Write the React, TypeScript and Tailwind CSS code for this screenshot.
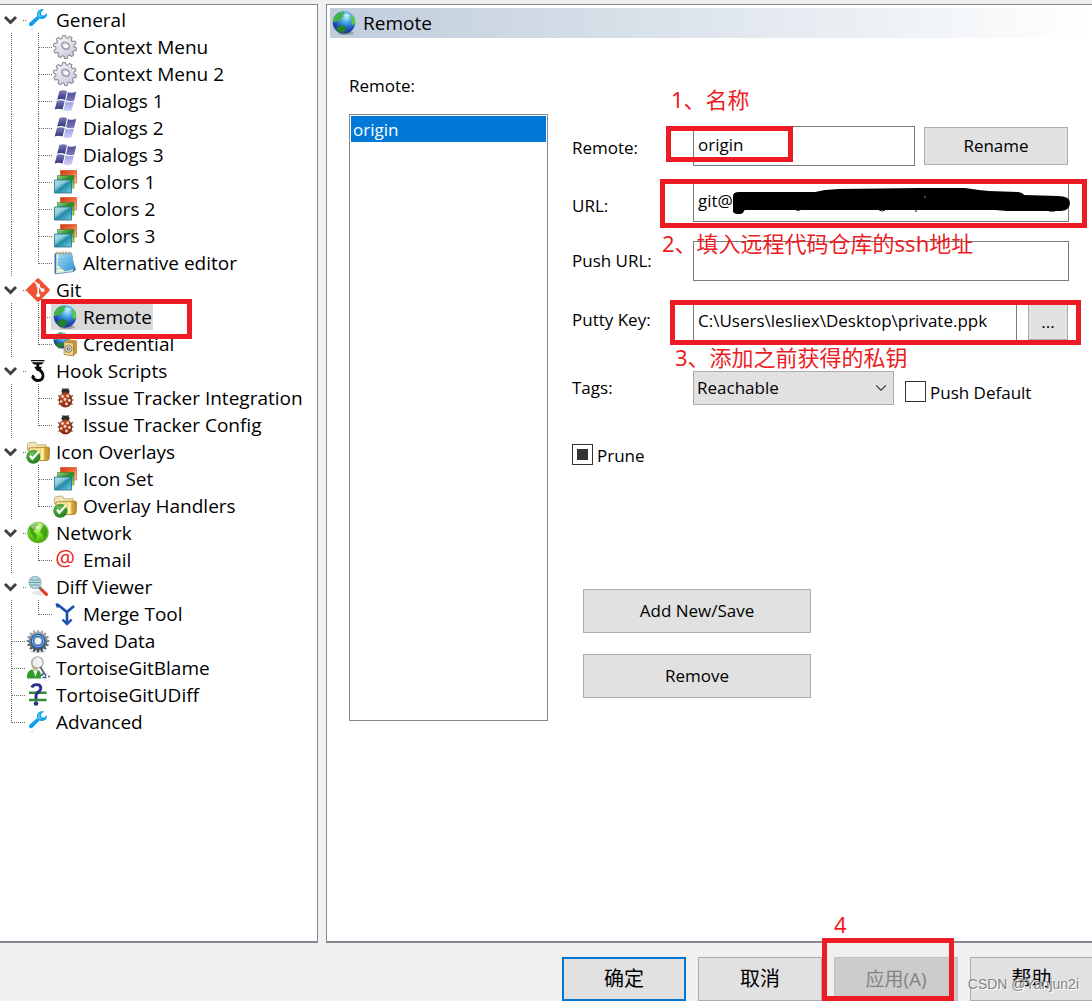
import React, { useEffect, useRef, useState } from 'react';
import { ChevronDown } from 'lucide-react';

type IconName =
  | 'wrench' | 'gear' | 'windows' | 'colors' | 'notepad' | 'git' | 'globe' | 'credential' | 'hook'
  | 'bug' | 'folder' | 'network' | 'email' | 'diff' | 'merge' | 'saved' | 'blame' | 'udiff';

interface TreeNode {
  label: string;
  icon: IconName;
  children?: TreeNode[];
}

const TREE: TreeNode[] = [
  {
    label: 'General',
    icon: 'wrench',
    children: [
      { label: 'Context Menu', icon: 'gear' },
      { label: 'Context Menu 2', icon: 'gear' },
      { label: 'Dialogs 1', icon: 'windows' },
      { label: 'Dialogs 2', icon: 'windows' },
      { label: 'Dialogs 3', icon: 'windows' },
      { label: 'Colors 1', icon: 'colors' },
      { label: 'Colors 2', icon: 'colors' },
      { label: 'Colors 3', icon: 'colors' },
      { label: 'Alternative editor', icon: 'notepad' },
    ],
  },
  {
    label: 'Git',
    icon: 'git',
    children: [
      { label: 'Remote', icon: 'globe' },
      { label: 'Credential', icon: 'credential' },
    ],
  },
  {
    label: 'Hook Scripts',
    icon: 'hook',
    children: [
      { label: 'Issue Tracker Integration', icon: 'bug' },
      { label: 'Issue Tracker Config', icon: 'bug' },
    ],
  },
  {
    label: 'Icon Overlays',
    icon: 'folder',
    children: [
      { label: 'Icon Set', icon: 'colors' },
      { label: 'Overlay Handlers', icon: 'folder' },
    ],
  },
  { label: 'Network', icon: 'network', children: [{ label: 'Email', icon: 'email' }] },
  { label: 'Diff Viewer', icon: 'diff', children: [{ label: 'Merge Tool', icon: 'merge' }] },
  { label: 'Saved Data', icon: 'saved' },
  { label: 'TortoiseGitBlame', icon: 'blame' },
  { label: 'TortoiseGitUDiff', icon: 'udiff' },
  { label: 'Advanced', icon: 'wrench' },
];

// --- Icons ---
const gearPath = (teeth: number, outer: number, inner: number) => {
  const step = (Math.PI * 2) / teeth;
  const points: string[] = [];
  for (let i = 0; i < teeth; i++) {
    const a = i * step;
    [[-0.34, inner], [-0.2, outer], [0.2, outer], [0.34, inner]].forEach(([k, r]) => {
      points.push(`${(12 + Math.cos(a + k * step) * r).toFixed(2)} ${(12 + Math.sin(a + k * step) * r).toFixed(2)}`);
    });
  }
  return `M${points.join('L')}Z`;
};

// Gradients shared by all the icons
const IconDefs = () => (
  <svg className="absolute size-0" aria-hidden="true">
    <defs>
      <linearGradient id="gear" x1="0" y1="0" x2="1" y2="1">
        <stop offset="0" stopColor="#fafaff" /><stop offset="1" stopColor="#c4c4da" />
      </linearGradient>
      <linearGradient id="winDark" x1="0" y1="0" x2="0" y2="1">
        <stop offset="0" stopColor="#7d7dba" /><stop offset="1" stopColor="#33337a" />
      </linearGradient>
      <linearGradient id="winMid" x1="0" y1="0" x2="0" y2="1">
        <stop offset="0" stopColor="#4e4e98" /><stop offset="1" stopColor="#7a7abc" />
      </linearGradient>
      <linearGradient id="winLight" x1="0" y1="0" x2="0" y2="1">
        <stop offset="0" stopColor="#9d9ddd" /><stop offset="1" stopColor="#cfcffb" />
      </linearGradient>
      <linearGradient id="red" x1="0" y1="0" x2="1" y2="1">
        <stop offset="0" stopColor="#c93a12" /><stop offset=".5" stopColor="#f4673b" /><stop offset="1" stopColor="#ffd9b8" />
      </linearGradient>
      <linearGradient id="green" x1="0" y1="0" x2="1" y2="1">
        <stop offset="0" stopColor="#9bd58e" /><stop offset=".5" stopColor="#22861f" /><stop offset="1" stopColor="#c5ef5c" />
      </linearGradient>
      <linearGradient id="teal" x1="0" y1="0" x2="1" y2="1">
        <stop offset="0" stopColor="#9fdbe6" /><stop offset=".45" stopColor="#4fabc2" /><stop offset=".5" stopColor="#2489a6" /><stop offset="1" stopColor="#6fd0e4" />
      </linearGradient>
      <linearGradient id="pad" x1="0" y1="0" x2="1" y2="1">
        <stop offset="0" stopColor="#a9def5" /><stop offset="1" stopColor="#2b8fd8" />
      </linearGradient>
      <radialGradient id="ocean" cx=".6" cy=".25" r=".8">
        <stop offset="0" stopColor="#b9ecff" /><stop offset=".35" stopColor="#3fa0e6" /><stop offset=".75" stopColor="#1c45b0" /><stop offset="1" stopColor="#2a2f8c" />
      </radialGradient>
      <radialGradient id="lime" cx=".45" cy=".25" r=".8">
        <stop offset="0" stopColor="#d8ff8e" /><stop offset=".5" stopColor="#6fdd1a" /><stop offset="1" stopColor="#3f9a0c" />
      </radialGradient>
      <radialGradient id="shell" cx=".4" cy=".3" r=".8">
        <stop offset="0" stopColor="#c4542b" /><stop offset="1" stopColor="#7c1f06" />
      </radialGradient>
      <linearGradient id="gold" x1="0" y1="0" x2="1" y2="0">
        <stop offset="0" stopColor="#fff3bd" /><stop offset=".6" stopColor="#f2d56b" /><stop offset="1" stopColor="#b98418" />
      </linearGradient>
      <radialGradient id="tick" cx=".4" cy=".3" r=".8">
        <stop offset="0" stopColor="#6cc25a" /><stop offset="1" stopColor="#12730f" />
      </radialGradient>
      <linearGradient id="steel" x1="0" y1="0" x2="0" y2="1">
        <stop offset="0" stopColor="#b4b8bc" /><stop offset="1" stopColor="#3f454b" />
      </linearGradient>
    </defs>
  </svg>
);

const Globe = () => (
  <>
    <ellipse cx="14" cy="22" rx="8" ry="2" fill="#777" opacity=".55" />
    <circle cx="12" cy="11.5" r="11.2" fill="url(#ocean)" />
    <path d="M2.3 6C4 3 7.5.9 11.5.8L13 2.6 10.5 4 11.6 5.6 9 7.2 8.6 9.6 6.2 11 5 9.6 2.6 11.4 1 10.6C1 9 1.5 7.300 2.300 6Z" fill="#43b649" />
    <path d="M18.500 5.500 20.500 4.600C22.300 6.500 23.200 9 23.100 11.800L21.400 14.600 19.200 12.400 19.600 9.500Z" fill="#5cc83f" />
    <path d="M6 15.400 10 14 14.500 16.600 13.600 19.600 10.800 22.200C8 21.800 5 20 3.800 18Z" fill="#23802b" />
    <path d="M12 2.500C15 2 17.500 3.200 18.500 5 16 5.800 13 6 12 2.500Z" fill="#d9f6ff" opacity=".6" />
  </>
);

const ICONS: Record<IconName, React.ReactNode> = {
  wrench: (
    <>
      <path d="M4 21.500 8.500 18 7 22.500Q5.500 24 4 21.500Z" fill="#7fd0f5" opacity=".3" />
      <path d="M20.800 5.200 17.800 7.700 15.200 6.900 15.100 4 18 1.600C14.500.5 11.200 2.600 11 6.200L11.200 8 3.800 14.600C2.600 15.800 2.900 17.100 3.700 17.700 4.600 18.500 5.900 18.400 6.700 17.500L13.500 10.600C17.700 12 21.800 9.300 20.800 5.200Z" fill="#109fec" />
      <path d="M12.200 5.500C12.700 3.500 14 2.500 15.500 2.200L13.800 3.800 14 7.500 16 8.600 11.500 9.600Z" fill="#55c3fa" />
    </>
  ),
  gear: (
    <>
      <path d={gearPath(10, 11.6, 9.2)} transform="rotate(12 12 12)" fill="url(#gear)" stroke="#87858d" strokeWidth="1" strokeLinejoin="round" />
      <ellipse cx="12.500" cy="10.800" rx="4" ry="3.200" transform="rotate(30 12.500 10.800)" fill="#dedee8" stroke="#8f8d98" strokeWidth="1.300" />
      <ellipse cx="13.200" cy="11.200" rx="2" ry="1.600" fill="#fff" />
    </>
  ),
  windows: (
    <>
      <path d="M6.300 2.200Q10 .4 14 2.200L12 11Q8 9.200 4.200 10.800Z" fill="url(#winDark)" />
      <path d="M15 3Q19 4.800 23.200 2.800L21.200 11.600Q17 13 13 11.200Z" fill="url(#winMid)" />
      <path d="M3.900 12Q7.800 10.400 11.700 12.200L9.600 20.600Q5.600 18.900 1.700 20.500Z" fill="url(#winDark)" />
      <path d="M12.700 12.400Q16.800 14.200 20.900 12.600L18.700 21.300Q14.500 23 10.600 21.200Z" fill="url(#winLight)" />
    </>
  ),
  colors: (
    <>
      <path d="M7.500.5h16v12.500h-16z" fill="url(#red)" stroke="#c8451d" strokeWidth=".6" />
      <path d="M4.500 5.500h16.500v12.500h-16.500z" fill="url(#green)" stroke="#35822c" strokeWidth=".6" />
      <path d="M1.500 10h17v13h-17z" fill="url(#teal)" stroke="#1d6f89" strokeWidth=".8" />
      <path d="M2 10.500h16Q8 13 2 20Z" fill="#fff" opacity=".28" />
    </>
  ),
  notepad: (
    <>
      <path d="M17 3 23 18.500 20 21.500Z" fill="#5a6f90" />
      <path d="M2 2.500 18.500 2 20.500 20.500 2 23Z" fill="#e8f6d4" stroke="#4a78b8" strokeWidth=".8" />
      <path d="M5.500 3 19 2.700 21.800 18 12 20.500 4.500 14Z" fill="url(#pad)" />
      <path d="M3.500 8.500h15M3.500 11.500h15.500M3.500 14.500h15.500M3.500 17.500h16" stroke="#5fb0c8" strokeWidth=".6" opacity=".7" />
      <path d="M2.500 3V22" stroke="#3c6fc0" strokeWidth="1.400" />
      <path d="M4 .5v3M7 .5v3M10 .5v3M13 .5v3M16 .5v3" stroke="#b89f5a" strokeWidth="1.300" />
    </>
  ),
  git: (
    <>
      <path d="M10.900.7Q12 -.2 13.100.7L23.400 10.900Q24.300 12 23.400 13.100L13.100 23.400Q12 24.300 10.900 23.400L.6 13.100Q-.3 12 .6 10.900Z" fill="#f05133" />
      <path d="M8.500 3.500 12.200 7.200V17.500M12.200 8 16.200 12" stroke="#fff" strokeWidth="1.600" fill="none" />
      <circle cx="12.200" cy="7.500" r="1.900" fill="#fff" />
      <circle cx="12.200" cy="17.200" r="1.900" fill="#fff" />
      <circle cx="16.600" cy="12.200" r="1.900" fill="#fff" />
    </>
  ),
  globe: <Globe />,
  credential: (
    <>
      <g transform="scale(.72)"><Globe /></g>
      <path d="M11 10 15 7.500 24 8.500V21L20.500 24 11 22.500Z" fill="#c3983e" />
      <path d="M11 10 20.500 11V24L11 22.500Z" fill="#ecd48a" stroke="#98742a" strokeWidth=".6" />
      <circle cx="15.500" cy="16.800" r="3.600" fill="#d5d3c8" stroke="#77715c" strokeWidth=".8" />
      <circle cx="15.500" cy="16.800" r="1.300" fill="none" stroke="#5e5b4e" strokeWidth=".9" />
    </>
  ),
  hook: (
    <>
      <path d="M5 1h13.500v1.300H5zM5.500 3.200h12.500L15.500 5.600H8z" fill="#080808" />
      <path d="M11.800 5V9.500C14.500 11.500 17 13 17 16.500 17 19.800 14.800 21.500 12 21.500 9.500 21.500 7.600 20.300 6.800 17.800" fill="none" stroke="#080808" strokeWidth="2.800" />
      <path d="M5 19 6.500 15.500 9.300 17.800ZM8.200 7.800h7.600L13.800 12H11Z" fill="#080808" />
    </>
  ),
  bug: (
    <>
      <path d="M9.500 2 11 4.500M15.500 2 13.600 4.500" stroke="#333" strokeWidth="1" />
      <ellipse cx="12.500" cy="5.500" rx="4" ry="3" fill="#2c2b2a" />
      <path d="M5 9.500 8 11M4.500 14h3M5.500 18.500 8 17M20 9.500 17 11M20.500 14h-3M19.500 18.500 17 17" stroke="#47352c" strokeWidth="1.200" />
      <ellipse cx="12.500" cy="14" rx="6.800" ry="7.600" fill="url(#shell)" />
      <g fill="#f4d9cb">
        <circle cx="9.500" cy="10.500" r="1.400" /><circle cx="14.800" cy="10" r="1.400" />
        <circle cx="12" cy="13.500" r="1.400" /><circle cx="8.200" cy="15.500" r="1.300" />
        <circle cx="16.400" cy="14.500" r="1.400" /><circle cx="13.500" cy="18" r="1.400" />
      </g>
    </>
  ),
  folder: (
    <>
      <path d="M1.500 10V4.500Q1.500 3 3 2.800L8.500 2Q10 2 10.500 3.500L11 5 20 4.500V10Z" fill="#f0e4b8" stroke="#bba568" strokeWidth=".8" />
      <path d="M3 8 21.500 7Q23.700 7 23.600 9L23 18.500Q22.800 20.500 21 20.500H3Z" fill="url(#gold)" stroke="#a87d1e" strokeWidth=".8" />
      <path d="M16.500 8.500V20" stroke="#fff7cf" strokeWidth="2" />
      <path d="M19.500 8.500V20" stroke="#cf9a2a" strokeWidth="1" opacity=".6" />
      <circle cx="7.300" cy="16.700" r="7" fill="url(#tick)" />
      <path d="M3.200 16.500 6.200 20.500 13.800 12 12.200 10.700 6.600 16.800 4.600 15Z" fill="#fff" />
    </>
  ),
  network: (
    <>
      <circle cx="12" cy="11.500" r="10.500" fill="url(#lime)" stroke="#59a91e" strokeWidth=".5" />
      <path d="M3 7C5 3.500 8 2 11.500 2L13 4 10 5.500 10.500 8 7.500 9.500 9.500 12.500 11 14.500 9 19 7.500 15.500 4.500 12Z" fill="#2f8711" opacity=".7" />
      <path d="M16 3.500 19.500 5.500 21.500 9 21 13.500 18 17.500 16.500 13.500 14 11.500 15 8Z" fill="#2f8711" opacity=".65" />
      <ellipse cx="11" cy="5" rx="6.500" ry="3.500" fill="#fff" opacity=".35" />
    </>
  ),
  email: (
    <text x="12" y="18" textAnchor="middle" fontSize="22" fill="#f01a1a" fontFamily="Open Sans, sans-serif">@</text>
  ),
  diff: (
    <>
      <ellipse cx="14" cy="18" rx="8" ry="2.500" fill="#bbb" opacity=".35" />
      <path d="M14 13 20.500 19.500" stroke="#e8321f" strokeWidth="3" strokeLinecap="round" />
      <path d="M12.500 11.500 15.500 14.500" stroke="#777" strokeWidth="2.500" />
      <circle cx="9" cy="7.500" r="6" fill="#b5e0e6" stroke="#9eb6ba" strokeWidth="1.300" />
      <path d="M4.500 5h9M3.800 7.500h10.400M4.500 10h9" stroke="#699ca5" strokeWidth="1" />
    </>
  ),
  merge: (
    <>
      <path d="M4.500 2.500 14 10 21 4M14 10V20" fill="none" stroke="#1b4fae" strokeWidth="2.700" />
      <path d="M3.500 1.500 5 5.500M9.500 17.500 14 22 18.700 17.500" fill="none" stroke="#1b4fae" strokeWidth="2.400" />
    </>
  ),
  saved: (
    <>
      <ellipse cx="12" cy="22.500" rx="8" ry="1.300" fill="#999" opacity=".5" />
      <path d={gearPath(16, 11.4, 9.3)} fill="url(#steel)" />
      <circle cx="12" cy="12" r="7.500" fill="#2465ad" />
      <circle cx="12" cy="12" r="5.600" fill="none" stroke="#8fb8de" strokeWidth="1" />
      <circle cx="12" cy="12" r="3.800" fill="#f3f6f8" stroke="#8da6bd" strokeWidth="1" />
    </>
  ),
  blame: (
    <>
      <path d="M1 22.500Q.5 14.500 6 13.500L13 14.500Q15.500 17 15 22.500Z" fill="#2f9b2d" />
      <path d="M7 14 9.500 21 11.500 14.500Z" fill="#eef5ec" />
      <path d="M5 6Q5 1.500 10.500 2L14 8Q13 14 9 14 5.500 13 5 6Z" fill="#d9a672" />
      <circle cx="11.500" cy="6.500" r="5.600" fill="#f3f5f6" fillOpacity=".9" stroke="#a7acad" strokeWidth="1.300" />
      <path d="M14.500 11 18.500 18" stroke="#656d71" strokeWidth="2" />
      <path d="M15 19.500 18 17.500M16.500 21.500h4M22 20.500h2M19.500 17.500v3" stroke="#38688f" strokeWidth="1.600" />
    </>
  ),
  udiff: (
    <>
      <path d="M3 9.800h17.500M3 17h17.500" stroke="#2f8e35" strokeWidth="2.400" />
      <path d="M5.800 4.500C7 .8 14.800 .3 14.800 5.300 14.800 9 10 9 10 12.500V16" fill="none" stroke="#28308f" strokeWidth="2.900" />
      <circle cx="10" cy="20.500" r="2.300" fill="#28308f" />
    </>
  ),
};

const TreeIcon = ({ name }: { name: IconName }) => (
  <svg viewBox="0 0 24 24" className="size-6 shrink-0 overflow-visible" aria-hidden="true">{ICONS[name]}</svg>
);

// --- Tree ---
const Dotted = ({ d, width }: { d: string; width: number }) => (
  <svg width={width} height="27" className="shrink-0 overflow-visible" aria-hidden="true">
    <path d={d} fill="none" stroke="#6b6b6b" strokeDasharray="1 1" shapeRendering="crispEdges" />
  </svg>
);

interface NodeButtonProps {
  node: TreeNode;
  selected: boolean;
  onSelect: (label: string) => void;
}

const NodeButton = ({ node, selected, onSelect }: NodeButtonProps) => (
  <button
    type="button"
    onClick={() => onSelect(node.label)}
    className={`flex h-[26px] items-center gap-[6px] pl-[2px] pr-px whitespace-nowrap ${selected ? 'bg-[#d9d9d9]' : ''}`}
  >
    <TreeIcon name={node.icon} />
    {node.label}
  </button>
);

const SettingsTree = () => {
  const [selected, setSelected] = useState('Remote');
  const [collapsed, setCollapsed] = useState<string[]>([]);

  const toggle = (label: string) => {
    setCollapsed(prev => (prev.includes(label) ? prev.filter(l => l !== label) : [...prev, label]));
  };

  return (
    <nav className="w-[318px] shrink-0 border-t border-r border-b-2 border-[#828790] bg-white pt-px text-[19px] leading-[26px]">
      <ul>
        {TREE.map((node, i) => (
          <li key={node.label}>
            <div className="flex h-[27px] items-center">
              {node.children ? (
                <button type="button" aria-label={`Toggle ${node.label}`} onClick={() => toggle(node.label)} className="w-6 shrink-0">
                  <svg width="24" height="27" className="block overflow-visible" aria-hidden="true">
                    <path d="M5 11 10.500 16.500 16 11" fill="none" stroke="#404040" strokeWidth="3" />
                    <path d="M23 14.500h4" stroke="#6b6b6b" strokeDasharray="1 1" />
                  </svg>
                </button>
              ) : (
                <Dotted width={24} d={i === TREE.length - 1 ? 'M11.5 0V14.500M12 14.500H26' : 'M11.5 0V27M12 14.500H26'} />
              )}
              <NodeButton node={node} selected={selected === node.label} onSelect={setSelected} />
            </div>
            {node.children && !collapsed.includes(node.label) && (
              <ul>
                {node.children.map((child, j) => (
                  <li key={child.label} className="relative flex h-[27px] items-center">
                    <Dotted width={24} d="M11.5 0V27" />
                    <Dotted width={27} d={j === node.children!.length - 1 ? 'M14.5 0V14.500M15 14.500H29' : 'M14.5 0V27M15 14.500H29'} />
                    <NodeButton node={child} selected={selected === child.label} onSelect={setSelected} />
                    {child.label === 'Remote' && (
                      <span className="pointer-events-none absolute -top-1 left-[41px] z-10 h-10 w-[151px] border-5 border-[#ed1c24]" />
                    )}
                  </li>
                ))}
              </ul>
            )}
          </li>
        ))}
      </ul>
    </nav>
  );
};

// --- Form ---
const inputClass = 'h-10 min-w-0 border border-[#7a7a7a] bg-white px-1 pb-1 outline-none';
const buttonClass = 'border border-[#adadad] bg-[#e1e1e1] hover:bg-[#e5f1fb]';
const markClass = 'pointer-events-none absolute border-5 border-[#ed1c24]';
const noteClass = "pointer-events-none absolute z-10 whitespace-nowrap font-['Noto_Sans','Noto_Sans_CJK_SC',sans-serif] text-[22px] leading-6 text-[#ed1c24]";
const checkClass = 'grid size-[21px] shrink-0 appearance-none place-content-center border border-[#333] bg-white checked:bg-[#333] before:hidden before:size-[11px] before:bg-[#333] indeterminate:before:block';

const RemoteForm = () => {
  const pruneRef = useRef<HTMLInputElement>(null);

  useEffect(() => {
    if (pruneRef.current) pruneRef.current.indeterminate = true;
  }, []);

  return (
    <form className="min-w-0 flex-1 pt-[52px]" onSubmit={e => e.preventDefault()}>
      <div className="relative flex items-center">
        <label htmlFor="name" className="mt-1 w-[121px] shrink-0">Remote:</label>
        <input id="name" defaultValue="origin" className={`${inputClass} flex-1`} />
        <button type="button" className={`${buttonClass} mr-px ml-[9px] h-[38px] w-36`}>Rename</button>
        <span className={`${markClass} top-0 left-[94px] h-9 w-[127px]`} />
        <span className={`${noteClass} -top-[39px] left-[99px]`}>1、名称</span>
      </div>

      <div className="relative mt-4 flex items-center">
        <label htmlFor="url" className="mt-2 w-[121px] shrink-0">URL:</label>
        <input id="url" defaultValue="git@" className={`${inputClass} flex-1`} />
        {/* redaction over the host part */}
        <svg viewBox="0 0 338 28" className="pointer-events-none absolute top-[4px] left-[161px] h-7 w-[338px]" aria-hidden="true">
          <path d="M0 10Q0 6 6 6H82L92 4 106 3 186 2H232L246 4 256 5 285 6Q290 7 291 9L325 10Q337 10 337 17 337 24 328 25H274L262 24H12Q11 24 10 27 4 30 0 26Z" fill="#000" />
          <path d="M61 23q4 3 8 0M146 24q4 2 6 0M183 23v3M316 25h6" stroke="#000" strokeWidth="1" fill="none" />
          <path d="M191 11h2" stroke="#999" />
        </svg>
        <span className={`${markClass} -top-[3px] left-[88px] h-[49px] w-[427px]`} />
        <span className={`${noteClass} top-[49px] left-[90px]`}>2、填入远程代码仓库的ssh地址</span>
      </div>

      <div className="mt-[19px] flex items-center">
        <label htmlFor="pushUrl" className="w-[121px] shrink-0">Push URL:</label>
        <input id="pushUrl" className={`${inputClass} flex-1`} />
      </div>

      <div className="relative mt-[21px] flex items-center">
        <label htmlFor="key" className="mb-1 w-[121px] shrink-0">Putty Key:</label>
        <input id="key" defaultValue="C:\Users\lesliex\Desktop\private.ppk" className={`${inputClass} flex-1`} />
        <button type="button" aria-label="Browse" className={`${buttonClass} mr-px ml-[11px] h-9 w-10`}>...</button>
        <span className={`${markClass} -top-[2px] left-[98px] h-[45px] w-[411px]`} />
        <span className={`${noteClass} top-[43px] left-[103px]`}>3、添加之前获得的私钥</span>
      </div>

      <div className="mt-[29px] flex items-center">
        <label htmlFor="tags" className="w-[121px] shrink-0">Tags:</label>
        <div className="relative">
          <select id="tags" className="h-[34px] w-[201px] appearance-none border border-[#adadad] bg-[#e1e1e1] px-[3px]">
            <option>Reachable</option>
            <option>All</option>
            <option>None</option>
          </select>
          <ChevronDown size={18} strokeWidth={1.5} className="pointer-events-none absolute top-2 right-1 text-[#444]" />
        </div>
        <label className="mt-[6px] ml-[11px] flex items-center gap-1 whitespace-nowrap">
          <input type="checkbox" className={checkClass} />
          <span className="pt-1">Push Default</span>
        </label>
      </div>

      <label className="mt-[35px] flex w-fit items-center gap-1">
        <input ref={pruneRef} type="checkbox" className={checkClass} />
        <span className="pt-1">Prune</span>
      </label>

      <div className="mt-[121px] ml-[11px] flex w-[228px] flex-col gap-[21px]">
        <button type="button" className={`${buttonClass} h-11`}>Add New/Save</button>
        <button type="button" className={`${buttonClass} h-11`}>Remove</button>
      </div>
    </form>
  );
};

const App: React.FC = () => {
  return (
    <div className="flex min-h-screen flex-col overflow-hidden bg-[#f0f0f0] pt-1 font-['Open_Sans','Noto_Sans_CJK_SC',sans-serif] text-[17px] leading-6 text-black">
      <IconDefs />
      <div className="flex flex-1 gap-2">
        <SettingsTree />

        <main className="flex min-w-0 flex-1 flex-col border-t border-b-2 border-l border-[#828790] bg-white">
          <h1 className="mt-[3px] ml-[3px] flex h-[30px] items-center gap-[7px] bg-linear-to-r from-[#bfcddb] to-white pl-[2px] text-[19px]">
            <TreeIcon name="globe" />
            Remote
          </h1>
          <div className="flex flex-1 gap-6 pt-9 pr-[23px] pb-[220px] pl-[22px]">
            <section className="flex w-[199px] shrink-0 flex-col gap-4">
              <h2 id="remotes">Remote:</h2>
              <ul role="listbox" aria-labelledby="remotes" className="flex-1 border border-[#828790] p-px">
                <li role="option" aria-selected="true" className="h-[26px] bg-[#0078d7] px-[2px] leading-7 text-white">origin</li>
              </ul>
            </section>
            <RemoteForm />
          </div>
        </main>
      </div>

      <footer className="relative flex justify-end gap-3 pt-[14px] text-[20px]">
        <button type="button" className="h-11 w-[124px] border-2 border-[#0078d7] bg-[#e1e1e1]">确定</button>
        <button type="button" className={`${buttonClass} h-11 w-[124px]`}>取消</button>
        <div className="relative">
          <button type="button" disabled className="h-11 w-[124px] border border-[#bfbfbf] bg-[#ccc] text-[19px] text-[#838383]">应用(A)</button>
          <span className={`${markClass} -top-[19px] -left-3 h-[63px] w-[132px]`} />
          <span className={`${noteClass} -top-[45px] left-0`}>4</span>
        </div>
        <button type="button" className="h-11 w-[122px] border border-r-0 border-[#adadad] bg-[#e1e1e1]">帮助</button>
        <span className="pointer-events-none absolute right-[13px] bottom-[7px] font-['Liberation_Sans',sans-serif] text-[14px] leading-5 text-[#858585] [text-shadow:1px_1px_0_#fff]">CSDN @Yanjun2i</span>
      </footer>
    </div>
  );
};

export default App;
